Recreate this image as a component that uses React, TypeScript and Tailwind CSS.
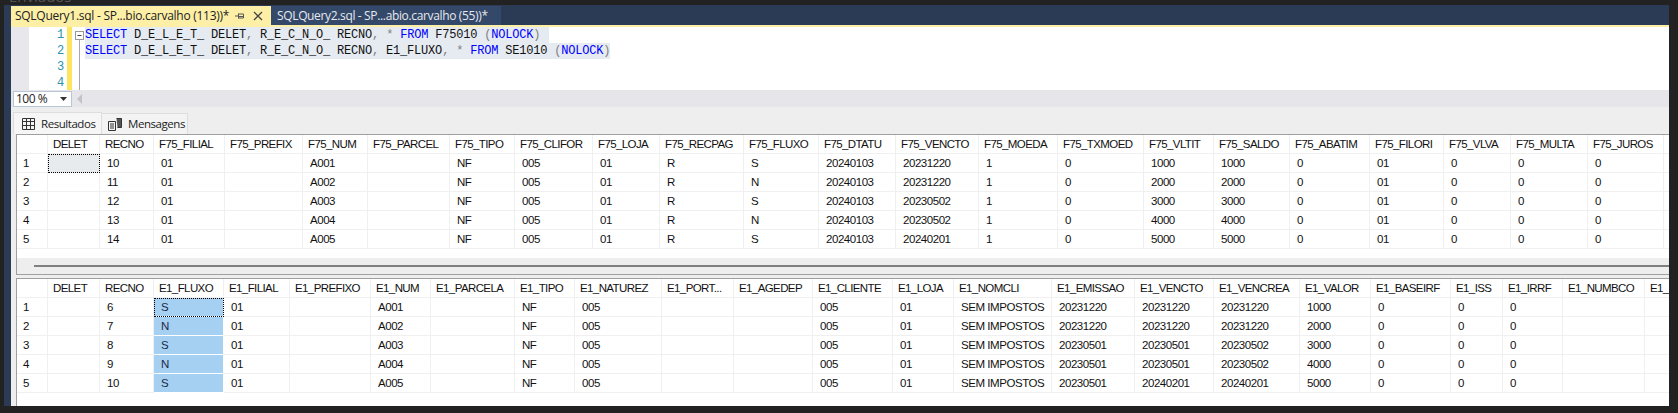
import React from "react";

const topRows = [
  ["1", "", "10", "01", "", "A001", "", "NF", "005", "01", "R", "S", "20240103", "20231220", "1", "0", "1000", "1000", "0", "01", "0", "0", "0", ""],
  ["2", "", "11", "01", "", "A002", "", "NF", "005", "01", "R", "N", "20240103", "20231220", "1", "0", "2000", "2000", "0", "01", "0", "0", "0", ""],
  ["3", "", "12", "01", "", "A003", "", "NF", "005", "01", "R", "S", "20240103", "20230502", "1", "0", "3000", "3000", "0", "01", "0", "0", "0", ""],
  ["4", "", "13", "01", "", "A004", "", "NF", "005", "01", "R", "N", "20240103", "20230502", "1", "0", "4000", "4000", "0", "01", "0", "0", "0", ""],
  ["5", "", "14", "01", "", "A005", "", "NF", "005", "01", "R", "S", "20240103", "20240201", "1", "0", "5000", "5000", "0", "01", "0", "0", "0", ""],
];
const topHead = ["", "DELET", "RECNO", "F75_FILIAL", "F75_PREFIX", "F75_NUM", "F75_PARCEL", "F75_TIPO", "F75_CLIFOR", "F75_LOJA", "F75_RECPAG", "F75_FLUXO", "F75_DTATU", "F75_VENCTO", "F75_MOEDA", "F75_TXMOED", "F75_VLTIT", "F75_SALDO", "F75_ABATIM", "F75_FILORI", "F75_VLVA", "F75_MULTA", "F75_JUROS", ""];

const bottomHead = ["", "DELET", "RECNO", "E1_FLUXO", "E1_FILIAL", "E1_PREFIXO", "E1_NUM", "E1_PARCELA", "E1_TIPO", "E1_NATUREZ", "E1_PORT...", "E1_AGEDEP", "E1_CLIENTE", "E1_LOJA", "E1_NOMCLI", "E1_EMISSAO", "E1_VENCTO", "E1_VENCREA", "E1_VALOR", "E1_BASEIRF", "E1_ISS", "E1_IRRF", "E1_NUMBCO", "E1_HIST"];
const bottomRows = [
  ["1", "", "6", "S", "01", "", "A001", "", "NF", "005", "", "", "005", "01", "SEM IMPOSTOS", "20231220", "20231220", "20231220", "1000", "0", "0", "0", "", ""],
  ["2", "", "7", "N", "01", "", "A002", "", "NF", "005", "", "", "005", "01", "SEM IMPOSTOS", "20231220", "20231220", "20231220", "2000", "0", "0", "0", "", ""],
  ["3", "", "8", "S", "01", "", "A003", "", "NF", "005", "", "", "005", "01", "SEM IMPOSTOS", "20230501", "20230501", "20230502", "3000", "0", "0", "0", "", ""],
  ["4", "", "9", "N", "01", "", "A004", "", "NF", "005", "", "", "005", "01", "SEM IMPOSTOS", "20230501", "20230501", "20230502", "4000", "0", "0", "0", "", ""],
  ["5", "", "10", "S", "01", "", "A005", "", "NF", "005", "", "", "005", "01", "SEM IMPOSTOS", "20230501", "20240201", "20240201", "5000", "0", "0", "0", "", ""],
];

const topCols = "grid-cols-[31px_52px_54px_71px_78px_65px_82px_65px_78px_67px_84px_75px_77px_83px_79px_86px_70px_76px_80px_74px_67px_77px_76px_200px]";
const bottomCols = "grid-cols-[31px_52px_54px_70px_66px_81px_60px_84px_60px_87px_72px_79px_80px_61px_98px_83px_79px_86px_71px_80px_52px_60px_82px_200px]";

const cellBase = "h-[19px] border-r border-b border-[#f0f0f0] overflow-hidden whitespace-nowrap leading-[18px]";

function ResultGrid({ cols, head, rows, highlightCol, focusCol }: { cols: string; head: string[]; rows: string[][]; highlightCol: number; focusCol: number }) {
  return (
    <div className={`grid w-max ${cols}`}>
      {head.map((h, i) => (
        <div key={i} className={`${cellBase} pl-[5px] tracking-[-0.6px]`}>{h}</div>
      ))}
      {rows.map((row, r) =>
        row.map((v, c) => {
          const hl = c === highlightCol;
          const focus = c === focusCol && r === 0;
          return (
            <div
              key={`${r}-${c}`}
              className={`${cellBase} ${c === 0 ? "pl-[6px]" : "pl-[7px]"} tracking-[-0.45px] ${hl ? "bg-[#a6d0f2] text-[#1c2a4a] border-white" : ""} ${focus ? "outline outline-1 -outline-offset-1 outline-dotted outline-black" : ""} ${focus && !hl ? "bg-[#e8ebee]" : ""}`}
            >
              {v}
            </div>
          );
        })
      )}
    </div>
  );
}

function K({ children }: { children: React.ReactNode }) {
  return <span className="text-[#0000ff]">{children}</span>;
}
function G({ children }: { children: React.ReactNode }) {
  return <span className="text-[#808080]">{children}</span>;
}

export default function App() {
  return (
    <div className="w-[1678px] h-[413px] bg-[#222222] overflow-hidden font-['Liberation_Sans',sans-serif] text-[11.5px] text-[#111111]">
      <div className="h-[5px] overflow-hidden pl-[9px]">
        <div className="-mt-[12px] text-[15px] leading-[16px] text-[#555555] font-['Open_Sans',sans-serif]">Enviados</div>
      </div>

      <div className="ml-[4px] w-[1665px] h-[401px] bg-[#2b3b55] flex flex-col">
        {/* document tabs */}
        <div className="h-[20px] pl-[7px] pt-[1px] flex font-['Open_Sans',sans-serif] text-[12px] leading-[19px] tracking-[-0.35px] shrink-0">
          <div className="w-[260px] bg-[#fdf0a6] text-[#222222] flex items-center pl-[4px]">
            <span className="w-[213px] whitespace-nowrap tracking-[-0.27px]">SQLQuery1.sql - SP...bio.carvalho (113))*</span>
            <svg width="10" height="10" viewBox="0 0 10 10" className="ml-[7px]" fill="none" stroke="#555" strokeWidth="1">
              <path d="M0 5h3M3.5 2.5v5M3.5 3h5v4h-5M4 5.5h4.5" />
            </svg>
            <svg width="10" height="10" viewBox="0 0 10 10" className="ml-[8px]" fill="none" stroke="#444" strokeWidth="1.3">
              <path d="M1 1l8 8M9 1l-8 8" />
            </svg>
          </div>
          <div className="w-[230px] bg-[#34486a] text-[#e6e8ec] pl-[6px] whitespace-nowrap">SQLQuery2.sql - SP...abio.carvalho (55))*</div>
        </div>

        <div className="ml-[7px] flex-1 flex flex-col min-h-0">
          <div className="h-[2px] bg-[#fdf0a6] shrink-0" />

          {/* editor */}
          <div className="h-[63px] bg-white flex overflow-hidden shrink-0 font-['Liberation_Mono',monospace] text-[12px] leading-[16px] tracking-[-0.2px]">
            <div className="w-[18px] bg-[#e8e8ec]" />
            <div className="w-[38px] pr-[3px] text-right text-[#2b91af]">
              <div>1</div>
              <div>2</div>
              <div>3</div>
              <div>4</div>
            </div>
            <div className="w-[5px] bg-[#fde65c]" />
            <svg width="13" height="63" viewBox="0 0 13 63" fill="none" className="shrink-0">
              <rect x="3.5" y="4.5" width="8" height="8" stroke="#9a9a9a" />
              <path d="M5.5 8.5h4" stroke="#444" />
              <path d="M7.5 13v50" stroke="#a8a8a8" />
            </svg>
            <div className="whitespace-pre text-[#111111]">
              <div className="w-[464px] bg-[#e5ebf1]">
                <K>SELECT</K> D_E_L_E_T_ DELET<G>,</G> R_E_C_N_O_ RECNO<G>,</G> <G>*</G> <K>FROM</K> F75010 <G>(</G><K>NOLOCK</K><G>)</G>
              </div>
              <div className="w-[525px] bg-[#e5ebf1]">
                <K>SELECT</K> D_E_L_E_T_ DELET<G>,</G> R_E_C_N_O_ RECNO<G>,</G> E1_FLUXO<G>,</G> <G>*</G> <K>FROM</K> SE1010 <G>(</G><K>NOLOCK</K><G>)</G>
              </div>
            </div>
          </div>

          {/* zoom bar */}
          <div className="h-[17px] bg-[#e6e6ea] flex items-center shrink-0">
            <div className="ml-[2px] w-[59px] h-[16px] bg-white border border-[#b9c6d6] flex items-center justify-between pl-[2px] pr-[4px] font-['Open_Sans',sans-serif] text-[12px] tracking-[-0.5px] text-[#222222]">
              <span>100 %</span>
              <svg width="7" height="4" viewBox="0 0 7 4"><path d="M0 0h7L3.5 4z" fill="#333" /></svg>
            </div>
            <svg width="6" height="10" viewBox="0 0 6 10" className="ml-[5px]"><path d="M5 0v10L0 5z" fill="#c4c4c8" /></svg>
          </div>

          {/* results tabs */}
          <div className="h-[27px] bg-[#eeeeee] flex items-end pl-[2px] shrink-0 font-['Open_Sans',sans-serif] text-[11.5px] tracking-[-0.45px] text-[#222222]">
            <div className="w-[89px] h-[22px] bg-[#f6f6f6] border border-b-0 border-[#dddddd] flex items-center pl-[8px] gap-[6px]">
              <svg width="13" height="12" viewBox="0 0 13 12" fill="none" stroke="#333" strokeWidth="1">
                <path d="M.5.5h12v11H.5zM.5 3.5h12M.5 7.5h12M4.5.5v11M8.5.5v11" />
              </svg>
              <span>Resultados</span>
            </div>
            <div className="w-[86px] h-[21px] bg-[#f3f3f3] border border-l-0 border-b-0 border-[#dddddd] flex items-center pl-[6px] gap-[6px]">
              <svg width="14" height="14" viewBox="0 0 14 14" fill="none" stroke="#333" strokeWidth="1">
                <path d="M.5 4.5h7v9h-7zM2 7h4M2 9h4M2 11h4" />
                <path d="M8.5 1.5h5v9h-4" fill="#555" />
              </svg>
              <span>Mensagens</span>
            </div>
          </div>

          {/* results */}
          <div className="flex-1 bg-[#eeeeee] pl-[5px] flex flex-col min-h-0">
            <div className="h-[124px] bg-white border-t border-l border-[#a0a0a0] overflow-hidden shrink-0">
              <ResultGrid cols={topCols} head={topHead} rows={topRows} highlightCol={-1} focusCol={1} />
            </div>
            <div className="h-[17px] border-l border-b border-[#a0a0a0] pt-[7px] pl-[17px] shrink-0">
              <div className="h-[2px] bg-[#808080]" />
            </div>
            <div className="h-[3px] shrink-0" />
            <div className="flex-1 bg-white border-t border-l border-[#a0a0a0] overflow-hidden">
              <ResultGrid cols={bottomCols} head={bottomHead} rows={bottomRows} highlightCol={3} focusCol={3} />
            </div>
          </div>
        </div>
      </div>
    </div>
  );
}
